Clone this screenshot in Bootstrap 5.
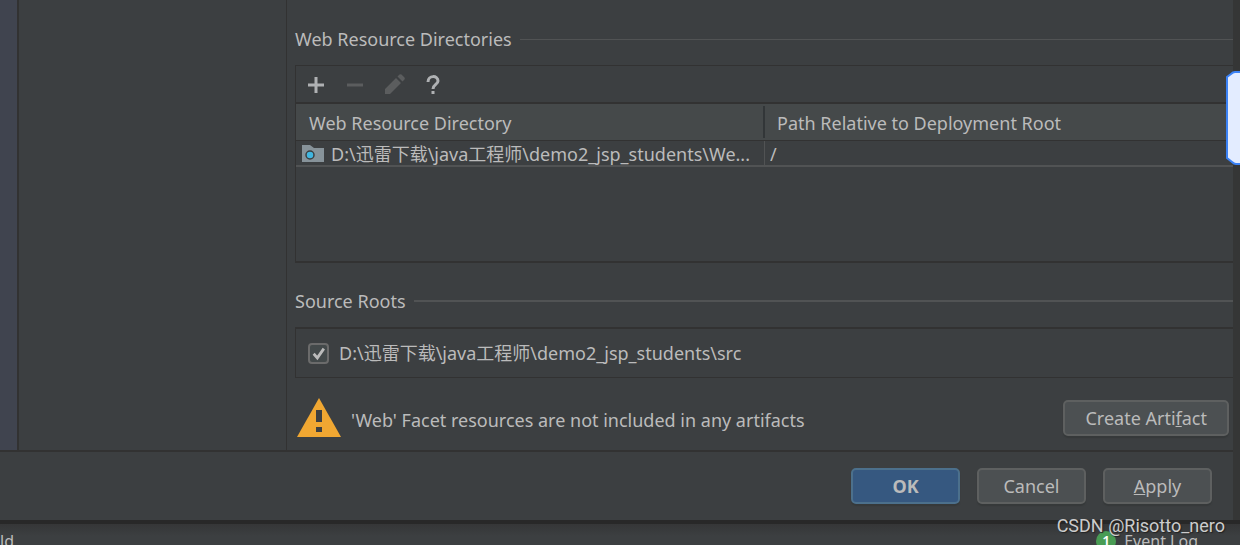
<!DOCTYPE html>
<html lang="en">
<head>
<meta charset="utf-8">
<meta name="viewport" content="width=device-width, initial-scale=1">
<title>Project Structure</title>
<link href="https://cdn.jsdelivr.net/npm/bootstrap@5.3.0/dist/css/bootstrap.min.css" rel="stylesheet">
<style>
  body { background: #3c3f41; color: #bbb; font-family: "Noto Sans", "Noto Sans CJK SC", sans-serif; font-size: 18px; line-height: 24px; }
  .app-shell { background: #353636; }
  .dialog-window { background: #3c3f41; margin-right: 7px; }
  .side-strip { width: 19px; background: #40444f; border-right: 2px solid #323232; }
  .tree-pane { width: 268px; border-right: 1px solid #323232; }
  .facet-pane { padding: 27px 0 12px 8px; min-width: 0; }
  .section-title { font-size: 18px; line-height: 24px; margin: 0; font-weight: 400; }
  .section-rule { height: 1px; background: #515354; }
  .section-rule.thick { height: 2px; }
  .dir-panel { margin-top: 14px; border: 1px solid #323232; border-right: 0; border-bottom-width: 2px; height: 198px; }
  .tool-row { height: 38px; border-bottom: 2px solid #323232; padding: 2px 0 0 8px; gap: 15px; }
  .tool-btn { width: 24px; height: 24px; border: 0; border-radius: 3px; }
  .dir-table { table-layout: fixed; border-collapse: separate; border-spacing: 0; }
  .dir-table th { height: 37px; padding: 2px 12px 0; background: #45494a; border-bottom: 1px solid #323232; font-weight: 400; }
  .dir-table th:first-child { padding-left: 13px; background: linear-gradient(#323638, #323638) right center / 2px 32px no-repeat #45494a; }
  .dir-table td { padding: 0 5px; border-bottom: 2px solid #515354; }
  .dir-table td:first-child { padding-left: 6px; border-right: 1px solid #515354; }
  .cell-line { height: 24px; line-height: 26px; overflow: hidden; gap: 7px; }
  .dir-col { width: 469px; }
  .roots-head { margin-top: 26px; }
  .roots-panel { margin-top: 14px; border: solid #323232; border-width: 2px 0 1px 1px; padding: 12px; gap: 10px; }
  .roots-panel .form-check-input { width: 21px; height: 21px; margin: 0; background-color: #43494a; border: 2px solid #6b6b6b; border-radius: 4px; background-size: 18px;
    background-image: url("data:image/svg+xml,%3csvg xmlns='http://www.w3.org/2000/svg' viewBox='0 0 20 20'%3e%3cpath fill='none' stroke='%23bbb' stroke-width='3' d='M4.5 10l4 4.5L15.5 4.5'/%3e%3c/svg%3e"); }
  .warn-row { margin-top: 20px; padding-right: 4px; gap: 10px; }
  .warn-text { padding-top: 3px; }
  .dlg-btn { --bs-btn-color: #bbb; --bs-btn-bg: #4c5052; --bs-btn-border-color: #5e6060; --bs-btn-hover-color: #ccc; --bs-btn-hover-bg: #55595c; --bs-btn-hover-border-color: #6a6c6c;
    --bs-btn-border-radius: 5px; --bs-btn-border-width: 2px; --bs-btn-font-size: 18px; --bs-btn-line-height: 22px; --bs-btn-padding-y: 5px; --bs-btn-padding-x: 20px; box-shadow: 0 2px 1px #36393a; }
  .dlg-btn.main-action { --bs-btn-bg: #365880; --bs-btn-border-color: #4c708c; --bs-btn-font-weight: 700; }
  .foot-row { border-top: 2px solid #323232; padding: 16px 21px 16px; gap: 17px; }
  .foot-row .dlg-btn { width: 109px; padding-left: 0; padding-right: 0; }
  .status-bar { height: 25px; border-top: 4px solid #282828; background: linear-gradient(#353637, #3c3f41 12px); font-size: 16px; line-height: 34px; overflow: hidden; padding-right: 42px; }
  .event-dot { width: 20px; height: 20px; border-radius: 50%; background: #499c54; color: #fff; font-size: 14px; line-height: 20px; font-weight: 600; margin-top: 7px; }
  .mark-text { right: 15px; bottom: 7px; font-family: Roboto, sans-serif; font-size: 18px; color: #ccc; text-shadow: 1px 1px 1px #222; }
  .edge-handle { right: 0; top: 71px; }
</style>
</head>
<body>
<div class="app-shell position-relative d-flex flex-column min-vh-100 overflow-hidden">
  <main class="dialog-window d-flex flex-column flex-grow-1">
    <div class="d-flex flex-grow-1">
      <div class="side-strip flex-shrink-0"></div>
      <div class="tree-pane flex-shrink-0"></div>
      <section class="facet-pane flex-grow-1">
        <div class="d-flex align-items-center gap-2">
          <h2 class="section-title">Web Resource Directories</h2>
          <div class="section-rule flex-grow-1"></div>
        </div>
        <div class="dir-panel">
          <div class="tool-row d-flex align-items-center">
            <button type="button" class="tool-btn btn p-0 d-flex" aria-label="Add"><svg width="24" height="24"><path d="M4 12h16M12 4v16" stroke="#afb1b3" stroke-width="3"/></svg></button>
            <button type="button" class="tool-btn btn p-0 d-flex" aria-label="Remove"><svg width="24" height="24"><path d="M4 12h16" stroke="#5b5d5e" stroke-width="3"/></svg></button>
            <button type="button" class="tool-btn btn p-0 d-flex" aria-label="Edit"><svg width="24" height="24" fill="#5b5d5e"><path d="M3 21v-5L14 5l5 5L8 21zM15.500 3.500L17.500 1.500Q18.500 1 19.500 1.500L22.500 4.500Q23.200 5.500 22.500 6.500L20.500 8.500z"/></svg></button>
            <button type="button" class="tool-btn btn p-0 d-flex" aria-label="Help"><svg width="24" height="24" fill="none" stroke="#afb1b3" stroke-width="3"><path d="M7 9C7 2 17 2 17 8C17 11.500 12 11.500 12 16M12 18v3"/></svg></button>
          </div>
          <table class="dir-table w-100">
            <colgroup><col class="dir-col"><col></colgroup>
            <thead><tr><th scope="col">Web Resource Directory</th><th scope="col">Path Relative to Deployment Root</th></tr></thead>
            <tbody><tr>
              <td><div class="cell-line d-flex">
                <svg class="flex-shrink-0" width="22" height="24"><path d="M0 4h8l4 3h10v14H0z" fill="#87939a"/><circle cx="8" cy="14" r="4" fill="#40b6e0" stroke="#3c3f41" stroke-width="1.500"/></svg>
                <span class="text-nowrap">D:\迅雷下载\java工程师\demo2_jsp_students\We...</span></div></td>
              <td><div class="cell-line">/</div></td>
            </tr></tbody>
          </table>
        </div>
        <div class="roots-head d-flex align-items-center gap-2">
          <h2 class="section-title">Source Roots</h2>
          <div class="section-rule thick flex-grow-1"></div>
        </div>
        <div class="roots-panel d-flex align-items-center">
          <input class="form-check-input flex-shrink-0" type="checkbox" id="rootSrc" checked>
          <label for="rootSrc">D:\迅雷下载\java工程师\demo2_jsp_students\src</label>
        </div>
        <div class="warn-row d-flex align-items-center">
          <svg class="flex-shrink-0" width="46" height="40"><path d="M24 0L46 39H2z" fill="#f0a732"/><path d="M21 12h6v12h-6zM21 29h6v5h-6z" fill="#3c3f41"/></svg>
          <span class="warn-text flex-grow-1">'Web' Facet resources are not included in any artifacts</span>
          <button type="button" class="btn dlg-btn">Create Arti<u>f</u>act</button>
        </div>
      </section>
    </div>
    <footer class="foot-row d-flex justify-content-end">
      <button type="button" class="btn dlg-btn main-action">OK</button>
      <button type="button" class="btn dlg-btn">Cancel</button>
      <button type="button" class="btn dlg-btn"><u>A</u>pply</button>
    </footer>
  </main>
  <div class="status-bar d-flex">
    <span class="flex-grow-1">ld</span>
    <span class="event-dot text-center me-2">1</span>
    <span>Event Log</span>
  </div>
  <div class="mark-text position-absolute">CSDN @Risotto_nero</div>
  <svg class="edge-handle position-absolute" width="14" height="94"><path d="M16 1H9Q7 1 5 3L1 6v81L6 91Q8 93 10 93H16" fill="#e3ecff" stroke="#3b82f6" stroke-width="2"/></svg>
</div>
<script src="https://cdn.jsdelivr.net/npm/bootstrap@5.3.0/dist/js/bootstrap.bundle.min.js"></script>
</body>
</html>
